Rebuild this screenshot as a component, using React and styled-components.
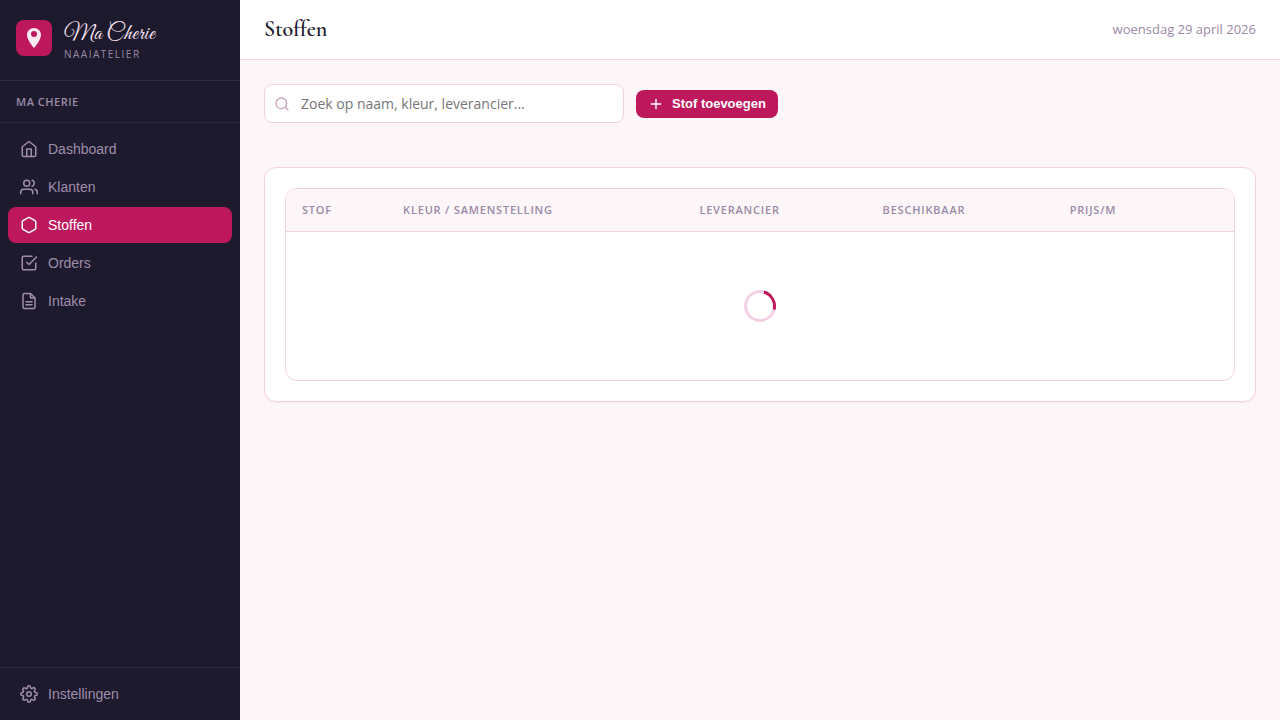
//Styling
import styled, { createGlobalStyle } from "styled-components";

//Icons
const HomeIcon = () => (
  <Icon viewBox="0 0 24 24">
    <path d="M3 9l9-7 9 7v11a2 2 0 0 1-2 2H5a2 2 0 0 1-2-2z" />
    <polyline points="9 22 9 12 15 12 15 22" />
  </Icon>
);

const UsersIcon = () => (
  <Icon viewBox="0 0 24 24">
    <path d="M17 21v-2a4 4 0 0 0-4-4H5a4 4 0 0 0-4 4v2" />
    <circle cx="9" cy="7" r="4" />
    <path d="M23 21v-2a4 4 0 0 0-3-3.87" />
    <path d="M16 3.13a4 4 0 0 1 0 7.75" />
  </Icon>
);

const FabricIcon = () => (
  <Icon viewBox="0 0 24 24">
    <path d="M21 16V8a2 2 0 0 0-1-1.73l-7-4a2 2 0 0 0-2 0l-7 4A2 2 0 0 0 3 8v8a2 2 0 0 0 1 1.73l7 4a2 2 0 0 0 2 0l7-4A2 2 0 0 0 21 16z" />
  </Icon>
);

const OrdersIcon = () => (
  <Icon viewBox="0 0 24 24">
    <polyline points="9 11 12 14 22 4" />
    <path d="M21 12v7a2 2 0 0 1-2 2H5a2 2 0 0 1-2-2V5a2 2 0 0 1 2-2h11" />
  </Icon>
);

const IntakeIcon = () => (
  <Icon viewBox="0 0 24 24">
    <path d="M14 2H6a2 2 0 0 0-2 2v16a2 2 0 0 0 2 2h12a2 2 0 0 0 2-2V8z" />
    <polyline points="14 2 14 8 20 8" />
    <line x1="16" y1="13" x2="8" y2="13" />
    <line x1="16" y1="17" x2="8" y2="17" />
  </Icon>
);

const SettingsIcon = () => (
  <Icon viewBox="0 0 24 24">
    <circle cx="12" cy="12" r="3" />
    <path d="M19.4 15a1.65 1.65 0 0 0 .33 1.82l.06.06a2 2 0 0 1-2.83 2.83l-.06-.06a1.65 1.65 0 0 0-1.82-.33 1.65 1.65 0 0 0-1 1.51V21a2 2 0 0 1-4 0v-.09A1.65 1.65 0 0 0 9 19.4a1.65 1.65 0 0 0-1.82.33l-.06.06a2 2 0 0 1-2.83-2.83l.06-.06a1.65 1.65 0 0 0 .33-1.82 1.65 1.65 0 0 0-1.51-1H3a2 2 0 0 1 0-4h.09A1.65 1.65 0 0 0 4.6 9a1.65 1.65 0 0 0-.33-1.82l-.06-.06a2 2 0 0 1 2.83-2.83l.06.06a1.65 1.65 0 0 0 1.82.33H9a1.65 1.65 0 0 0 1-1.51V3a2 2 0 0 1 4 0v.09a1.65 1.65 0 0 0 1 1.51 1.65 1.65 0 0 0 1.82-.33l.06-.06a2 2 0 0 1 2.83 2.83l-.06.06a1.65 1.65 0 0 0-.33 1.82V9a1.65 1.65 0 0 0 1.51 1H21a2 2 0 0 1 0 4h-.09a1.65 1.65 0 0 0-1.51 1z" />
  </Icon>
);

//Data
const navItems = [
  { label: "Dashboard", icon: HomeIcon },
  { label: "Klanten", icon: UsersIcon },
  { label: "Stoffen", icon: FabricIcon, active: true },
  { label: "Orders", icon: OrdersIcon },
  { label: "Intake", icon: IntakeIcon },
];

const columns = [
  "Stof",
  "Kleur / samenstelling",
  "Leverancier",
  "Beschikbaar",
  "Prijs/m",
  "",
];

const App = () => {
  return (
    <>
      <GlobalStyle />
      <Layout>
        <Sidebar>
          <Brand>
            <Logo>
              <svg width="24" height="24" viewBox="0 0 24 24">
                <path
                  d="M12 2C8.130 2 5 5.130 5 9c0 5.250 7 13 7 13s7-7.750 7-13c0-3.870-3.130-7-7-7zm0 9a3 3 0 1 1 0-6 3 3 0 0 1 0 6z"
                  fill="currentColor"
                />
              </svg>
            </Logo>
            <div>
              <BrandName>Ma Cherie</BrandName>
              <BrandSub>Naaiatelier</BrandSub>
            </div>
          </Brand>
          <Company>Ma Cherie</Company>
          <Nav>
            {navItems.map(({ label, icon: NavIcon, active }) => (
              <NavButton key={label} type="button" $active={active}>
                <NavIcon />
                {label}
              </NavButton>
            ))}
          </Nav>
          <SidebarFooter>
            <NavButton type="button">
              <SettingsIcon />
              Instellingen
            </NavButton>
          </SidebarFooter>
        </Sidebar>
        <Main>
          <Topbar>
            <Title>Stoffen</Title>
            <Today>woensdag 29 april 2026</Today>
          </Topbar>
          <Content>
            <Toolbar>
              <Search>
                <SearchIcon viewBox="0 0 24 24">
                  <circle cx="11" cy="11" r="8" />
                  <line x1="21" y1="21" x2="16.65" y2="16.65" />
                </SearchIcon>
                <SearchInput
                  type="text"
                  aria-label="Zoeken"
                  placeholder="Zoek op naam, kleur, leverancier..."
                />
              </Search>
              <AddButton type="button">
                <PlusIcon viewBox="0 0 24 24">
                  <line x1="12" y1="5" x2="12" y2="19" />
                  <line x1="5" y1="12" x2="19" y2="12" />
                </PlusIcon>
                Stof toevoegen
              </AddButton>
            </Toolbar>
            <Card>
              <TableWrap>
                <Table>
                  <thead>
                    <tr>
                      {columns.map((column) => (
                        <th key={column}>{column}</th>
                      ))}
                    </tr>
                  </thead>
                  <tbody>
                    <tr>
                      <td colSpan={columns.length}>
                        <Spinner />
                      </td>
                    </tr>
                  </tbody>
                </Table>
              </TableWrap>
            </Card>
          </Content>
        </Main>
      </Layout>
    </>
  );
};

const GlobalStyle = createGlobalStyle`
  * {
    margin: 0;
    padding: 0;
    box-sizing: border-box;
  }

  body {
    font-family: "Open Sans", sans-serif;
    font-size: 14px;
    line-height: 1.5;
    color: #1e1a2e;
    background: #fcf6f8;
  }

  button {
    font-family: "Liberation Sans", Arial, sans-serif;
    border: none;
    cursor: pointer;
  }
`;

const Layout = styled.div`
  display: flex;
  min-height: 100vh;
`;

const Sidebar = styled.aside`
  width: 240px;
  flex-shrink: 0;
  display: flex;
  flex-direction: column;
  background: #1e1a2e;
`;

const Brand = styled.div`
  display: flex;
  align-items: flex-start;
  gap: 12px;
  padding: 20px 16px;
  border-bottom: 1px solid rgba(255, 255, 255, 0.08);
`;

const Logo = styled.div`
  width: 36px;
  height: 36px;
  display: flex;
  align-items: center;
  justify-content: center;
  border-radius: 8px;
  background: #be185d;
  color: #fbe8f1;
`;

const BrandName = styled.div`
  font-family: "Great Vibes", "Liberation Serif", serif;
  font-size: 22px;
  line-height: 28px;
  letter-spacing: 0.5px;
  color: #fce7f3;
`;

const BrandSub = styled.div`
  font-size: 10px;
  line-height: 12px;
  letter-spacing: 1.5px;
  text-transform: uppercase;
  color: #9b8aa6;
`;

const Company = styled.div`
  padding: 12px 16px;
  font-size: 11px;
  font-weight: 600;
  line-height: 17px;
  letter-spacing: 0.5px;
  text-transform: uppercase;
  color: #9b8aa6;
  border-bottom: 1px solid rgba(255, 255, 255, 0.08);
`;

const Nav = styled.nav`
  flex: 1;
  display: flex;
  flex-direction: column;
  gap: 2px;
  padding: 8px;
`;

const NavButton = styled.button`
  width: 100%;
  height: 36px;
  display: flex;
  align-items: center;
  gap: 10px;
  padding: 0 12px;
  font-size: 14px;
  text-align: left;
  border-radius: 8px;
  background: ${({ $active }) => ($active ? "#be185d" : "transparent")};
  color: ${({ $active }) => ($active ? "#ffffff" : "#9f8dab")};
`;

const SidebarFooter = styled.div`
  padding: 8px;
  border-top: 1px solid rgba(255, 255, 255, 0.08);
`;

const Icon = styled.svg`
  width: 18px;
  height: 18px;
  flex-shrink: 0;
  fill: none;
  stroke: currentColor;
  stroke-width: 2;
  stroke-linecap: round;
  stroke-linejoin: round;
`;

const Main = styled.main`
  flex: 1;
  min-width: 0;
`;

const Topbar = styled.header`
  height: 60px;
  display: flex;
  align-items: center;
  justify-content: space-between;
  padding: 0 24px;
  background: #ffffff;
  border-bottom: 1px solid #f3d1e4;
`;

const Title = styled.h1`
  font-family: "Cormorant Garamond", "Liberation Serif", serif;
  font-size: 22px;
  font-weight: 600;
  font-variant-ligatures: none;
`;

const Today = styled.span`
  font-size: 13px;
  color: #9b8aa6;
`;

const Content = styled.div`
  padding: 24px;
`;

const Toolbar = styled.div`
  display: flex;
  align-items: center;
  gap: 12px;
  margin-bottom: 44px;
`;

const Search = styled.div`
  position: relative;
  width: 360px;
`;

const SearchIcon = styled(Icon)`
  position: absolute;
  top: 12px;
  left: 10px;
  width: 16px;
  height: 16px;
  color: #c9a0b8;
`;

const SearchInput = styled.input`
  display: block;
  width: 100%;
  height: 39px;
  padding: 0 12px 0 36px;
  font-family: inherit;
  font-size: 14px;
  color: inherit;
  border: 1px solid #f3d1e4;
  border-radius: 8px;
  background: #ffffff;
`;

const AddButton = styled.button`
  height: 28px;
  display: flex;
  align-items: center;
  gap: 8px;
  padding: 0 12px;
  font-size: 13px;
  font-weight: 600;
  border-radius: 8px;
  background: #be185d;
  color: #ffffff;
`;

const PlusIcon = styled(Icon)`
  width: 16px;
  height: 16px;
`;

const Card = styled.section`
  padding: 20px;
  background: #ffffff;
  border: 1px solid #f3d1e4;
  border-radius: 12px;
  box-shadow: 0 1px 2px rgba(190, 24, 93, 0.06);
`;

const TableWrap = styled.div`
  overflow: hidden;
  border: 1px solid #f3d1e4;
  border-radius: 12px;
`;

const Table = styled.table`
  width: 100%;
  border-collapse: collapse;

  th {
    height: 42px;
    padding: 0 16px;
    font-size: 11px;
    font-weight: 600;
    letter-spacing: 0.8px;
    text-align: left;
    text-transform: uppercase;
    white-space: nowrap;
    color: #9b8aa6;
    background: #fcf6f8;
    border-bottom: 1px solid #f3d1e4;
  }

  td {
    padding: 58px 16px;
  }
`;

const Spinner = styled.div`
  width: 32px;
  height: 32px;
  margin: 0 auto;
  border: 3px solid #f3d1e4;
  border-top-color: #be185d;
  border-radius: 50%;
  transform: rotate(60deg);
`;

export default App;
